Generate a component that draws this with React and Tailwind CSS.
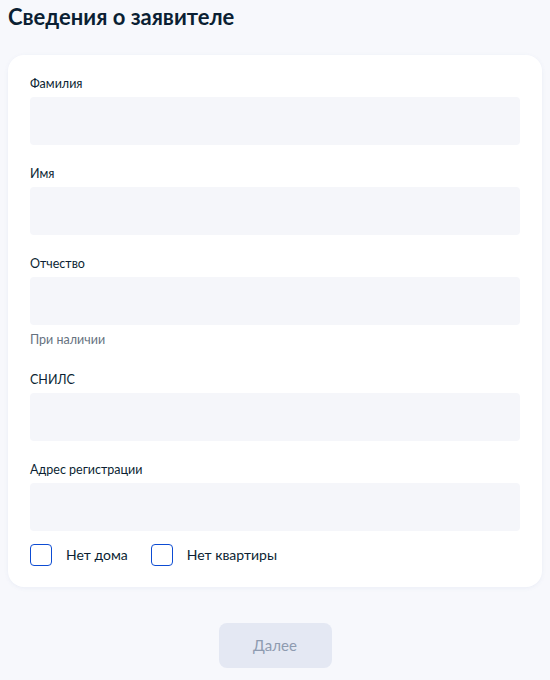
import React from 'react';

const fields = [
  { label: 'Фамилия' },
  { label: 'Имя' },
  { label: 'Отчество', hint: 'При наличии' },
  { label: 'СНИЛС' },
  { label: 'Адрес регистрации' },
];

const Checkbox = ({ label }) => (
  <label className="flex items-center">
    <span className="h-[22px] w-[22px] rounded-[4px] border-[1.5px] border-[#0d4cd3] bg-white" />
    <span className="ml-[14px] text-[14px] leading-[20px] text-[#0b1f33]">{label}</span>
  </label>
);

export default function App() {
  return (
    <div className="min-h-[680px] bg-[#f7f8fc] font-['Lato',sans-serif]">
      <h1 className="px-2 pt-[3px] text-[22px] font-bold leading-[28px] text-[#0b1f33]">
        Сведения о заявителе
      </h1>

      <div className="mx-2 mt-6 rounded-2xl bg-white px-[22px] pt-5 pb-[21px] shadow-[0_1px_4px_rgba(86,110,180,0.08)]">
        {fields.map((f, i) => (
          <div key={f.label} className={i === 0 ? '' : f.label === 'СНИЛС' ? 'mt-[22px]' : 'mt-5'}>
            <div className="text-[12.5px] leading-[18px] text-[#0b1f33]">{f.label}</div>
            <div className="mt-1 h-12 rounded-[4px] bg-[#f5f6fa]" />
            {f.hint && (
              <div className="mt-1.5 text-[12.5px] leading-[18px] text-[#66727f]">{f.hint}</div>
            )}
          </div>
        ))}

        <div className="mt-[13px] flex items-center gap-[23px]">
          <Checkbox label="Нет дома" />
          <Checkbox label="Нет квартиры" />
        </div>
      </div>

      <div className="mt-9 flex justify-center">
        <button className="h-[45px] w-[113px] rounded-lg bg-[#e4e8f3] text-[15px] text-[#8e9bb0]">
          Далее
        </button>
      </div>
    </div>
  );
}
